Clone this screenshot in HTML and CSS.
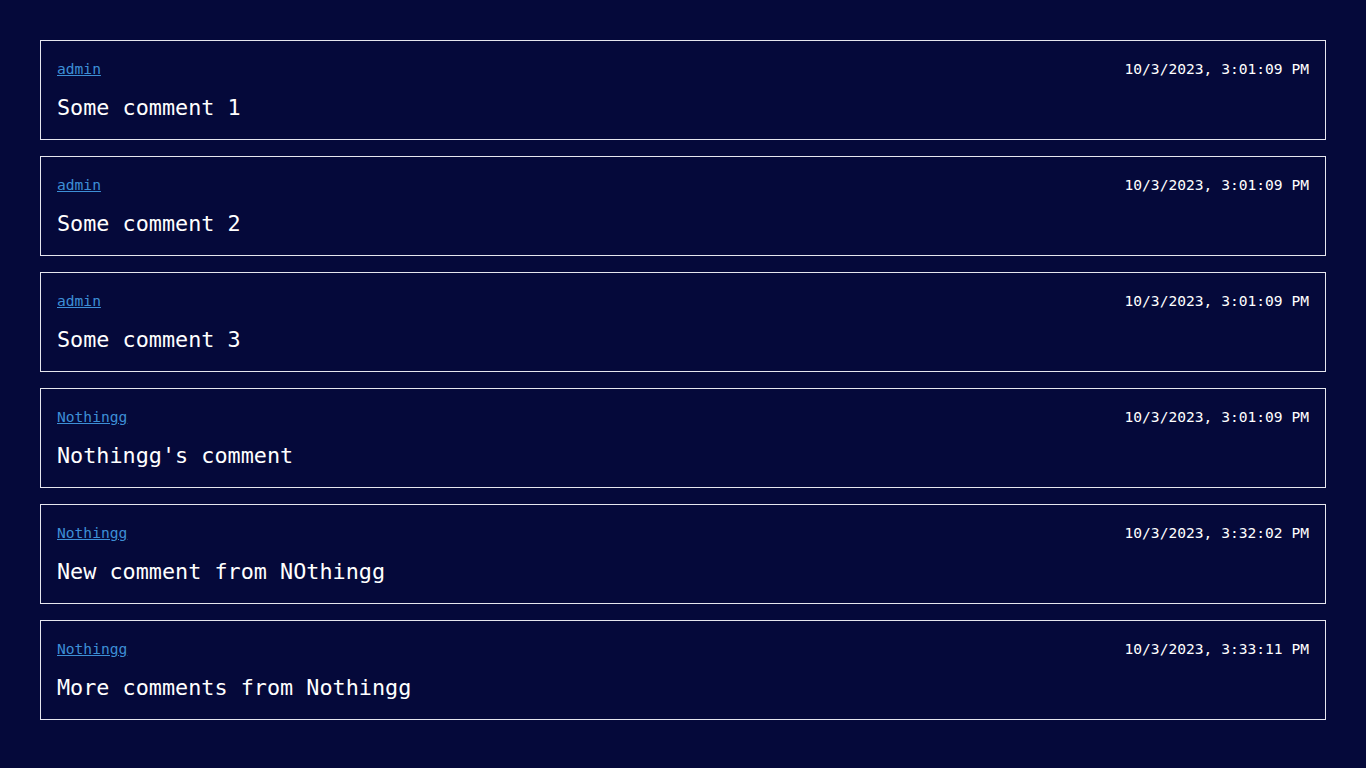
FILE: index.html
```html
<!DOCTYPE html>
<html>
<head>
<meta charset="utf-8">
<link rel="stylesheet" href="styles.css">
</head>
<body>
<main class="comments">
  <div class="comment">
    <div class="meta"><a href="#" class="author">admin</a><span class="date">10/3/2023, 3:01:09 PM</span></div>
    <p class="text">Some comment 1</p>
  </div>
  <div class="comment">
    <div class="meta"><a href="#" class="author">admin</a><span class="date">10/3/2023, 3:01:09 PM</span></div>
    <p class="text">Some comment 2</p>
  </div>
  <div class="comment">
    <div class="meta"><a href="#" class="author">admin</a><span class="date">10/3/2023, 3:01:09 PM</span></div>
    <p class="text">Some comment 3</p>
  </div>
  <div class="comment">
    <div class="meta"><a href="#" class="author">Nothingg</a><span class="date">10/3/2023, 3:01:09 PM</span></div>
    <p class="text">Nothingg's comment</p>
  </div>
  <div class="comment">
    <div class="meta"><a href="#" class="author">Nothingg</a><span class="date">10/3/2023, 3:32:02 PM</span></div>
    <p class="text">New comment from NOthingg</p>
  </div>
  <div class="comment">
    <div class="meta"><a href="#" class="author">Nothingg</a><span class="date">10/3/2023, 3:33:11 PM</span></div>
    <p class="text">More comments from Nothingg</p>
  </div>
</main>
</body>
</html>
```
FILE: styles.css
```css
html, body {
  margin: 0;
  background: #05093a;
}
body {
  padding: 40px;
  font-family: "DejaVu Sans Mono", "Liberation Mono", monospace;
  color: #ffffff;
}
.comments {
  display: flex;
  flex-direction: column;
  gap: 16px;
}
.comment {
  border: 1px solid #e6e6ee;
  padding: 16px;
  display: flex;
  flex-direction: column;
  gap: 13px;
}
.meta {
  display: flex;
  justify-content: space-between;
  align-items: center;
  height: 23px;
  font-size: 14.6px;
}
.author {
  color: #3d8fd6;
  text-decoration: underline;
}
.date {
  color: #ffffff;
}
.text {
  margin: 0;
  font-size: 21.8px;
  line-height: 30px;
}
```
